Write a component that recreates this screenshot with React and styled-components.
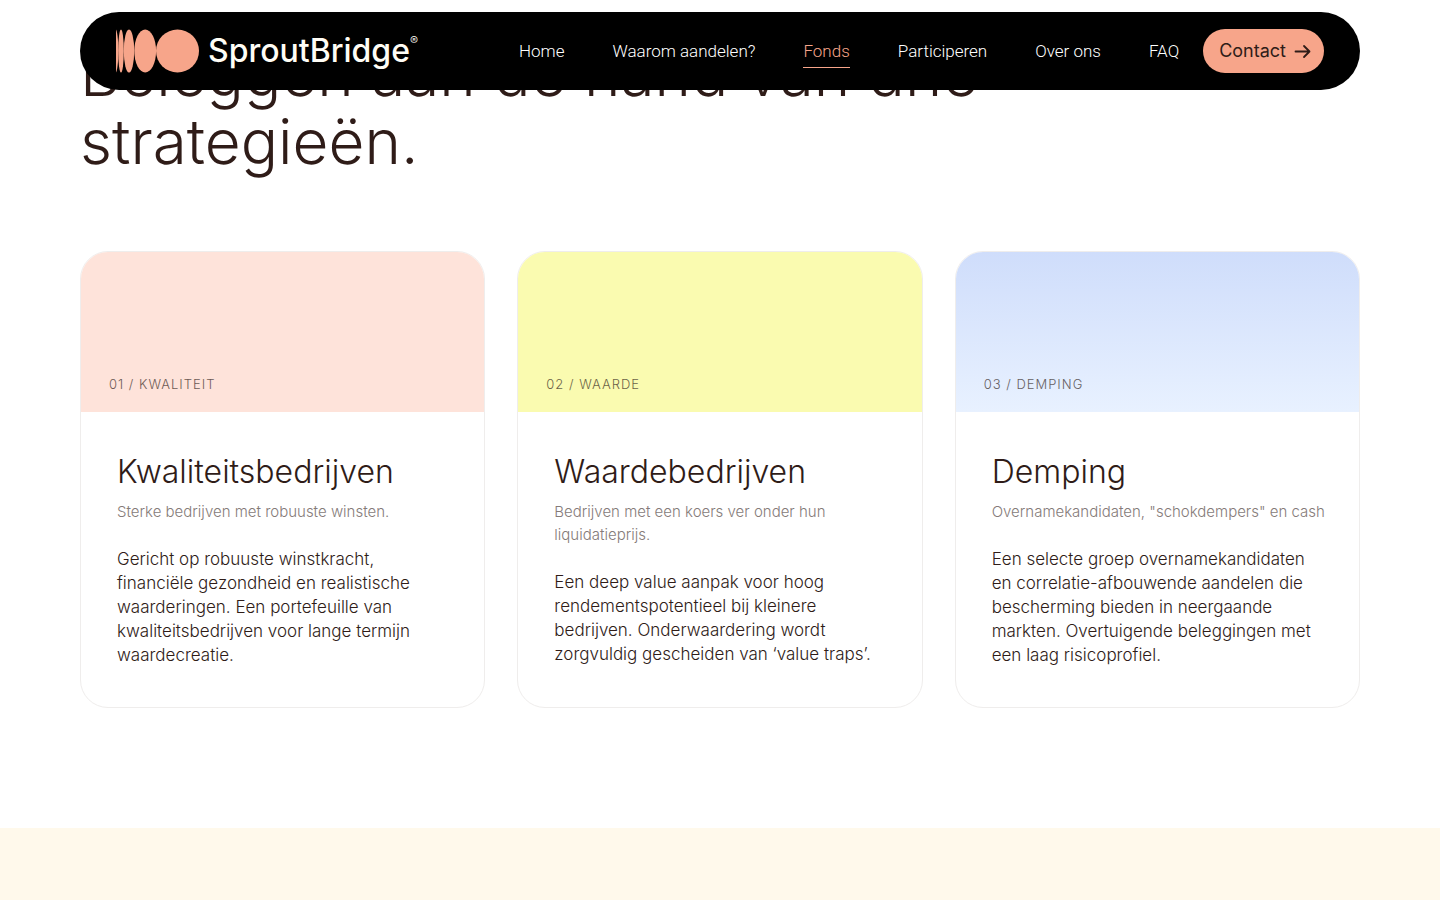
import React from 'react';
import styled, { createGlobalStyle } from 'styled-components';

const GlobalStyle = createGlobalStyle`
  *, *::before, *::after { box-sizing: border-box; }
  body {
    margin: 0;
    background: #fff;
    color: #2f1c18;
    font-family: Inter, "Liberation Sans", sans-serif;
    font-weight: 300;
  }
  h1, h2, p, ul { margin: 0; padding: 0; }
  a { color: inherit; text-decoration: none; }
`;

const Header = styled.header`
  position: fixed;
  top: 12px;
  left: 80px;
  right: 80px;
  z-index: 10;
  display: flex;
  align-items: center;
  justify-content: space-between;
  height: 78px;
  padding: 0 36px;
  border-radius: 39px;
  background: #000;
`;

const Brand = styled.a`
  display: flex;
  align-items: center;
  gap: 8px;
  color: #fffdf5;
`;

const BrandMark = styled.svg`
  display: block;
  width: 84px;
  height: 44px;
  fill: #f7a58a;
`;

const BrandName = styled.span`
  display: flex;
  font-size: 32px;
  line-height: 44px;
  font-weight: 500;
`;

const Registered = styled.sup`
  font-size: 12px;
  line-height: 24px;
  font-weight: 300;
`;

const Nav = styled.nav`
  display: flex;
  align-items: center;
  gap: 24px;
`;

const NavList = styled.ul`
  display: flex;
  gap: 48px;
  list-style: none;
`;

const NavLink = styled.a`
  display: block;
  padding: 4px 0;
  border-bottom: 1px solid ${(p) => (p.$active ? '#f7a58a' : 'transparent')};
  color: ${(p) => (p.$active ? '#f7a58a' : '#fff')};
  font-family: Roboto, sans-serif;
  font-size: 17px;
  line-height: 24px;
`;

const ContactLink = styled.a`
  display: flex;
  align-items: center;
  gap: 8px;
  height: 44px;
  padding: 0 13px 0 16px;
  border-radius: 22px;
  background: #f7a58a;
  color: #2f1c18;
  font-size: 18px;
  line-height: 24px;
  font-weight: 400;
`;

const Strategies = styled.section`
  padding: 40px 80px 120px;
`;

const Heading = styled.h1`
  max-width: 960px;
  margin-bottom: 75px;
  font-size: 62px;
  line-height: 68px;
  font-weight: 300;
`;

const CardGrid = styled.div`
  display: grid;
  grid-template-columns: repeat(3, minmax(0, 1fr));
  gap: 32px;
`;

const Card = styled.article`
  display: flex;
  flex-direction: column;
  overflow: hidden;
  border: 1px solid #efedec;
  border-radius: 28px;
`;

const CardBanner = styled.div`
  display: flex;
  align-items: flex-end;
  height: 160px;
  padding: 18px 28px;
  background: ${(p) => p.$fill};
`;

const CardLabel = styled.p`
  font-size: 13px;
  line-height: 20px;
  letter-spacing: 1px;
  text-transform: uppercase;
  opacity: 0.7;
`;

const CardBody = styled.div`
  padding: 40px 32px 40px 36px;
`;

const CardTitle = styled.h2`
  margin-bottom: 8px;
  font-size: 32px;
  line-height: 40px;
  font-weight: 300;
`;

const CardSubtitle = styled.p`
  margin-bottom: 24px;
  color: #857b79;
  font-size: 15px;
  line-height: 23px;
`;

const CardText = styled.p`
  font-size: 17px;
  line-height: 24px;
`;

const NextSection = styled.section`
  min-height: 72px;
  background: #fff9eb;
`;

const links = ['Home', 'Waarom aandelen?', 'Fonds', 'Participeren', 'Over ons', 'FAQ'];

const cards = [
  {
    label: '01 / Kwaliteit',
    fill: '#fee3da',
    title: 'Kwaliteitsbedrijven',
    subtitle: 'Sterke bedrijven met robuuste winsten.',
    text: 'Gericht op robuuste winstkracht, financiële gezondheid en realistische waarderingen. Een portefeuille van kwaliteitsbedrijven voor lange termijn waardecreatie.',
  },
  {
    label: '02 / Waarde',
    fill: '#fafbb0',
    title: 'Waardebedrijven',
    subtitle: 'Bedrijven met een koers ver onder hun liquidatieprijs.',
    text: 'Een deep value aanpak voor hoog rendementspotentieel bij kleinere bedrijven. Onderwaardering wordt zorgvuldig gescheiden van ‘value traps’.',
  },
  {
    label: '03 / Demping',
    fill: 'linear-gradient(#cfddfb, #e8f1ff)',
    title: 'Demping',
    subtitle: 'Overnamekandidaten, "schokdempers" en cash',
    text: 'Een selecte groep overnamekandidaten en correlatie-afbouwende aandelen die bescherming bieden in neergaande markten. Overtuigende beleggingen met een laag risicoprofiel.',
  },
];

export default function App() {
  return (
    <>
      <GlobalStyle />
      <Header>
        <Brand href="#" aria-label="SproutBridge">
          <BrandMark viewBox="0 0 84 44" aria-hidden="true">
            <path d="M0 .5C1.800 4 2.300 14 2.300 22s-.5 18-2.300 21.500z" />
            <ellipse cx="5" cy="22" rx="2.800" ry="21.500" />
            <ellipse cx="13" cy="22" rx="5.200" ry="21.500" />
            <ellipse cx="29.200" cy="22" rx="10.900" ry="21.500" />
            <circle cx="61.500" cy="22" r="21.500" />
          </BrandMark>
          <BrandName>
            SproutBridge<Registered>®</Registered>
          </BrandName>
        </Brand>
        <Nav aria-label="Hoofdmenu">
          <NavList>
            {links.map((label) => (
              <li key={label}>
                <NavLink href="#" $active={label === 'Fonds'}>{label}</NavLink>
              </li>
            ))}
          </NavList>
          <ContactLink href="#">
            Contact
            <svg width="17" height="16" viewBox="0 0 17 16" fill="none" stroke="currentColor" strokeWidth="1.800" strokeLinecap="round" strokeLinejoin="round" aria-hidden="true">
              <path d="M1.500 8.500h14M10 3l5.500 5.500L10 14" />
            </svg>
          </ContactLink>
        </Nav>
      </Header>
      <main>
        <Strategies>
          <Heading>Beleggen aan de hand van drie strategieën.</Heading>
          <CardGrid>
            {cards.map((card) => (
              <Card key={card.title}>
                <CardBanner $fill={card.fill}>
                  <CardLabel>{card.label}</CardLabel>
                </CardBanner>
                <CardBody>
                  <CardTitle>{card.title}</CardTitle>
                  <CardSubtitle>{card.subtitle}</CardSubtitle>
                  <CardText>{card.text}</CardText>
                </CardBody>
              </Card>
            ))}
          </CardGrid>
        </Strategies>
        <NextSection />
      </main>
    </>
  );
}
